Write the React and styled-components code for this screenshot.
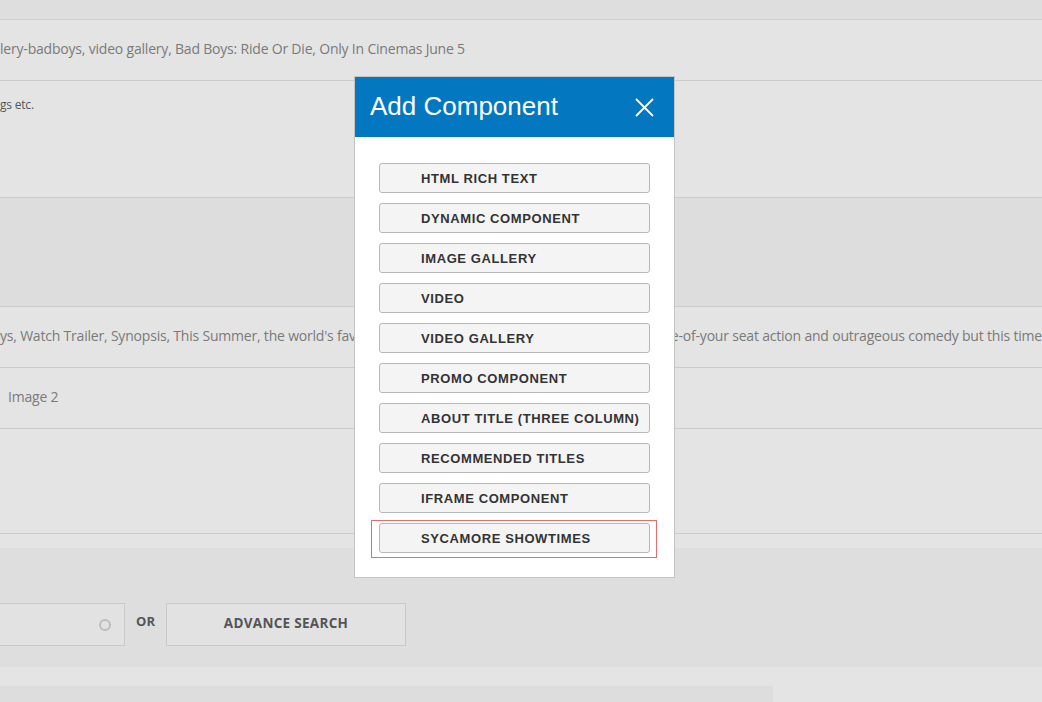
import React from "react";
import styled, { createGlobalStyle } from "styled-components";

const Global = createGlobalStyle`
  html, body { margin: 0; padding: 0; }
  body {
    width: 1042px;
    height: 702px;
    overflow: hidden;
    background: #e4e4e4;
    font-family: "Open Sans", "Noto Sans", sans-serif;
  }
`;

const Page = styled.div`
  position: relative;
  width: 1042px;
  height: 702px;
  overflow: hidden;
  background: #e4e4e4;
`;

const TopBand = styled.div`
  height: 19px;
  background: #dedede;
  border-bottom: 1px solid #cfcfcf;
`;

const Row = styled.div`
  height: ${(p) => p.$h}px;
  box-sizing: border-box;
  display: flex;
  align-items: ${(p) => (p.$top ? "flex-start" : "center")};
  padding: ${(p) => (p.$top ? "15px 0 0" : "0 0 3px")} ${(p) => p.$indent || 0}px;
  background: ${(p) => (p.$dark ? "#dddddd" : "#e4e4e4")};
  border-bottom: 1px solid #cbcbcb;
  white-space: nowrap;
  overflow: hidden;
`;

const RowText = styled.span`
  font-size: ${(p) => (p.$small ? 12 : 14)}px;
  color: ${(p) => (p.$small ? "#555" : "#7a7a7a")};
  letter-spacing: -0.2px;
`;

const Spacer = styled.div`
  height: ${(p) => p.$h}px;
  background: ${(p) => p.$bg};
`;

const SearchBand = styled.div`
  height: 119px;
  box-sizing: border-box;
  background: #dedede;
  padding-top: 55px;
  display: flex;
  align-items: flex-start;
`;

const SearchInput = styled.div`
  width: 125px;
  height: 43px;
  box-sizing: border-box;
  border: 1px solid #c9c9c9;
  border-left: none;
  background: #e2e2e2;
  display: flex;
  align-items: center;
  justify-content: flex-end;
  padding-right: 13px;
`;

const Radio = styled.span`
  width: 8px;
  height: 8px;
  border: 2px solid #bdbdbd;
  border-radius: 50%;
  margin-top: 1px;
`;

const OrLabel = styled.span`
  width: 41px;
  height: 43px;
  display: flex;
  align-items: center;
  justify-content: center;
  padding-bottom: 7px;
  box-sizing: border-box;
  font-weight: 700;
  font-size: 13px;
  color: #555;
`;

const AdvanceButton = styled.div`
  width: 240px;
  height: 43px;
  box-sizing: border-box;
  border: 1px solid #c9c9c9;
  background: #e2e2e2;
  display: flex;
  align-items: center;
  justify-content: center;
  padding-bottom: 3px;
  font-weight: 700;
  font-size: 13.5px;
  color: #555;
  letter-spacing: 0.3px;
`;

const BottomBar = styled.div`
  width: 773px;
  height: 16px;
  background: #dddddd;
`;

const Modal = styled.div`
  position: absolute;
  left: 354px;
  top: 76px;
  width: 321px;
  box-sizing: border-box;
  background: #fff;
  border: 1px solid #c4c4c4;
  font-family: "Liberation Sans", Arial, sans-serif;
`;

const ModalHeader = styled.div`
  height: 60px;
  background: #0377c0;
  display: flex;
  align-items: center;
  justify-content: space-between;
  padding: 0 20px 0 15px;
`;

const ModalTitle = styled.h2`
  margin: 0;
  font-weight: 400;
  font-size: 26px;
  color: #fff;
  padding-bottom: 1px;
`;

const CloseBtn = styled.button`
  border: none;
  background: none;
  padding: 0;
  width: 20px;
  height: 20px;
  display: flex;
  align-items: center;
  justify-content: center;
  cursor: pointer;
`;

const ModalBody = styled.div`
  display: flex;
  flex-direction: column;
  gap: 10px;
  padding: 26px 24px 19px 24px;
`;

const CompButton = styled.button`
  width: 271px;
  height: 30px;
  box-sizing: border-box;
  border: 1px solid #b8b8b8;
  border-radius: 3px;
  background: #f4f4f4;
  text-align: left;
  padding: 0 0 0 41px;
  font-family: "Liberation Sans", Arial, sans-serif;
  font-weight: 700;
  font-size: 13px;
  letter-spacing: 0.6px;
  color: #333;
`;

const Highlight = styled.div`
  margin: -3px -7px 0 -8px;
  padding: 2px 6px 4px 7px;
  border: 1px solid #de7070;
`;

const items = [
  "HTML RICH TEXT",
  "DYNAMIC COMPONENT",
  "IMAGE GALLERY",
  "VIDEO",
  "VIDEO GALLERY",
  "PROMO COMPONENT",
  "ABOUT TITLE (THREE COLUMN)",
  "RECOMMENDED TITLES",
  "IFRAME COMPONENT",
];

export default function App() {
  return (
    <>
      <Global />
      <Page>
        <TopBand />
        <Row $h={61}>
          <RowText>lery-badboys, video gallery, Bad Boys: Ride Or Die, Only In Cinemas June 5</RowText>
        </Row>
        <Row $h={117} $top>
          <RowText $small>gs etc.</RowText>
        </Row>
        <Row $h={109} $dark />
        <Row $h={61}>
          <RowText>
            ys, Watch Trailer, Synopsis, This Summer, the world's favorite Bad Boys are back, with their epic mix of edge-of-your seat action and outrageous comedy but this time with a twist
          </RowText>
        </Row>
        <Row $h={61} $indent={8}>
          <RowText>Image 2</RowText>
        </Row>
        <Row $h={105} />
        <Spacer $h={14} $bg="#e4e4e4" />
        <SearchBand>
          <SearchInput>
            <Radio />
          </SearchInput>
          <OrLabel>OR</OrLabel>
          <AdvanceButton>ADVANCE SEARCH</AdvanceButton>
        </SearchBand>
        <Spacer $h={19} $bg="#e4e4e4" />
        <BottomBar />

        <Modal>
          <ModalHeader>
            <ModalTitle>Add Component</ModalTitle>
            <CloseBtn aria-label="Close">
              <svg width="19" height="19" viewBox="0 0 19 19">
                <path d="M1 1 L18 18 M18 1 L1 18" stroke="#fff" strokeWidth="1.8" fill="none" />
              </svg>
            </CloseBtn>
          </ModalHeader>
          <ModalBody>
            {items.map((t) => (
              <CompButton key={t}>{t}</CompButton>
            ))}
            <Highlight>
              <CompButton>SYCAMORE SHOWTIMES</CompButton>
            </Highlight>
          </ModalBody>
        </Modal>
      </Page>
    </>
  );
}
